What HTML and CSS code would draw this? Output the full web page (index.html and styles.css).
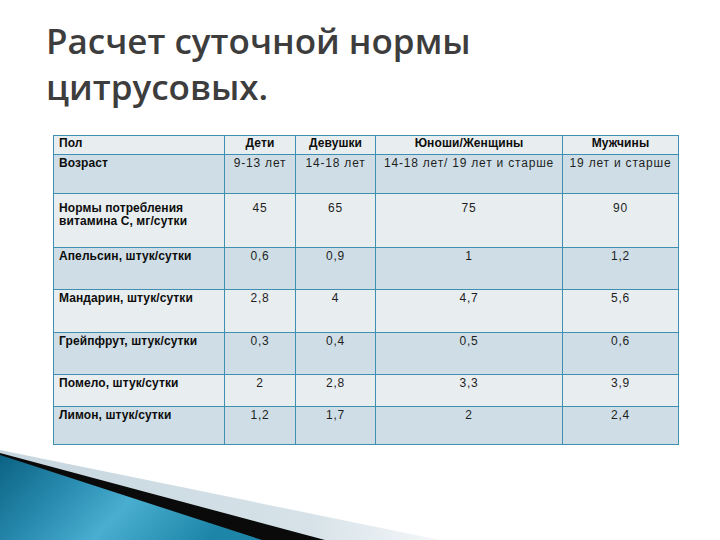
FILE: index.html
```html
<!DOCTYPE html>
<html lang="ru">
<head>
<meta charset="utf-8">
<link rel="stylesheet" href="styles.css">
</head>
<body>
<div class="slide">
  <h1 class="title">Расчет суточной нормы<br>цитрусовых.</h1>
  <table class="norms">
    <colgroup>
      <col class="c1"><col class="c2"><col class="c3"><col class="c4"><col class="c5">
    </colgroup>
    <tr class="r-head light">
      <th class="lbl">Пол</th><th>Дети</th><th>Девушки</th><th>Юноши/Женщины</th><th>Мужчины</th>
    </tr>
    <tr class="r-age dark">
      <th class="lbl">Возраст</th><td>9-13 лет</td><td>14-18 лет</td><td>14-18 лет/ 19 лет и старше</td><td>19 лет и старше</td>
    </tr>
    <tr class="r-norm light">
      <th class="lbl">Нормы потребления<br>витамина С, мг/сутки</th><td>45</td><td>65</td><td>75</td><td>90</td>
    </tr>
    <tr class="r-42 dark">
      <th class="lbl">Апельсин, штук/сутки</th><td>0,6</td><td>0,9</td><td>1</td><td>1,2</td>
    </tr>
    <tr class="r-43 light">
      <th class="lbl">Мандарин, штук/сутки</th><td>2,8</td><td>4</td><td>4,7</td><td>5,6</td>
    </tr>
    <tr class="r-42 dark">
      <th class="lbl">Грейпфрут, штук/сутки</th><td>0,3</td><td>0,4</td><td>0,5</td><td>0,6</td>
    </tr>
    <tr class="r-32 light">
      <th class="lbl">Помело, штук/сутки</th><td>2</td><td>2,8</td><td>3,3</td><td>3,9</td>
    </tr>
    <tr class="r-38 dark">
      <th class="lbl">Лимон, штук/сутки</th><td>1,2</td><td>1,7</td><td>2</td><td>2,4</td>
    </tr>
  </table>
  <svg class="deco" width="720" height="100" viewBox="0 440 720 100" aria-hidden="true">
    <defs>
      <linearGradient id="band" x1="0" y1="0" x2="1" y2="0">
        <stop offset="0" stop-color="#c6d6df"/>
        <stop offset="0.7" stop-color="#d6e2e8"/>
        <stop offset="1" stop-color="#f4f7f9"/>
      </linearGradient>
      <linearGradient id="blue" x1="0" y1="0" x2="1" y2="0.3">
        <stop offset="0" stop-color="#0b6283"/>
        <stop offset="0.35" stop-color="#2a8db2"/>
        <stop offset="0.6" stop-color="#49aed0"/>
        <stop offset="1" stop-color="#1d86a8"/>
      </linearGradient>
    </defs>
    <polygon points="0,450 440,540 0,540" fill="url(#band)"/>
    <polygon points="0,453 325,540 0,540" fill="#0a0a0a"/>
    <polygon points="0,455 262,540 0,540" fill="url(#blue)"/>
  </svg>
</div>
</body>
</html>
```
FILE: styles.css
```css
html, body {
  margin: 0;
  padding: 0;
  background: #ffffff;
}
.slide {
  position: relative;
  width: 720px;
  height: 540px;
  overflow: hidden;
  font-family: "Liberation Sans", Arial, sans-serif;
}
.title {
  margin: 18px 0 0 46px;
  font-family: "Open Sans", "DejaVu Sans", sans-serif;
  font-weight: 600;
  font-size: 35px;
  line-height: 46px;
  color: #3d3d3d;
}
.norms {
  margin: 25px 0 0 53px;
  border-collapse: collapse;
  table-layout: fixed;
  width: 625px;
}
.c1 { width: 171px; }
.c2 { width: 71px; }
.c3 { width: 80px; }
.c4 { width: 187px; }
.c5 { width: 116px; }
.norms th, .norms td {
  border: 1px solid #3f8fb0;
  padding: 2px 2px 0 2px;
  vertical-align: top;
  text-align: center;
  font-size: 12px;
  line-height: 13px;
  color: #1e1e1e;
  letter-spacing: 0.8px;
  white-space: nowrap;
  overflow: hidden;
}
.norms th {
  font-weight: bold;
  font-size: 12px;
  letter-spacing: 0.1px;
  color: #0d0d0d;
}
.norms th.lbl {
  text-align: left;
  padding-left: 5px;
}
.light { background: #e8edf0; }
.dark { background: #cfdee6; }
.r-head { height: 19px; }
.r-head th { padding-top: 1px; }
.r-age { height: 39px; }
.r-norm { height: 54px; }
.r-norm th, .r-norm td { padding-top: 8px; }
.r-42 { height: 42px; }
.r-43 { height: 43px; }
.r-32 { height: 32px; }
.r-38 { height: 38px; }
.deco {
  position: absolute;
  left: 0;
  bottom: 0;
  display: block;
}
```
